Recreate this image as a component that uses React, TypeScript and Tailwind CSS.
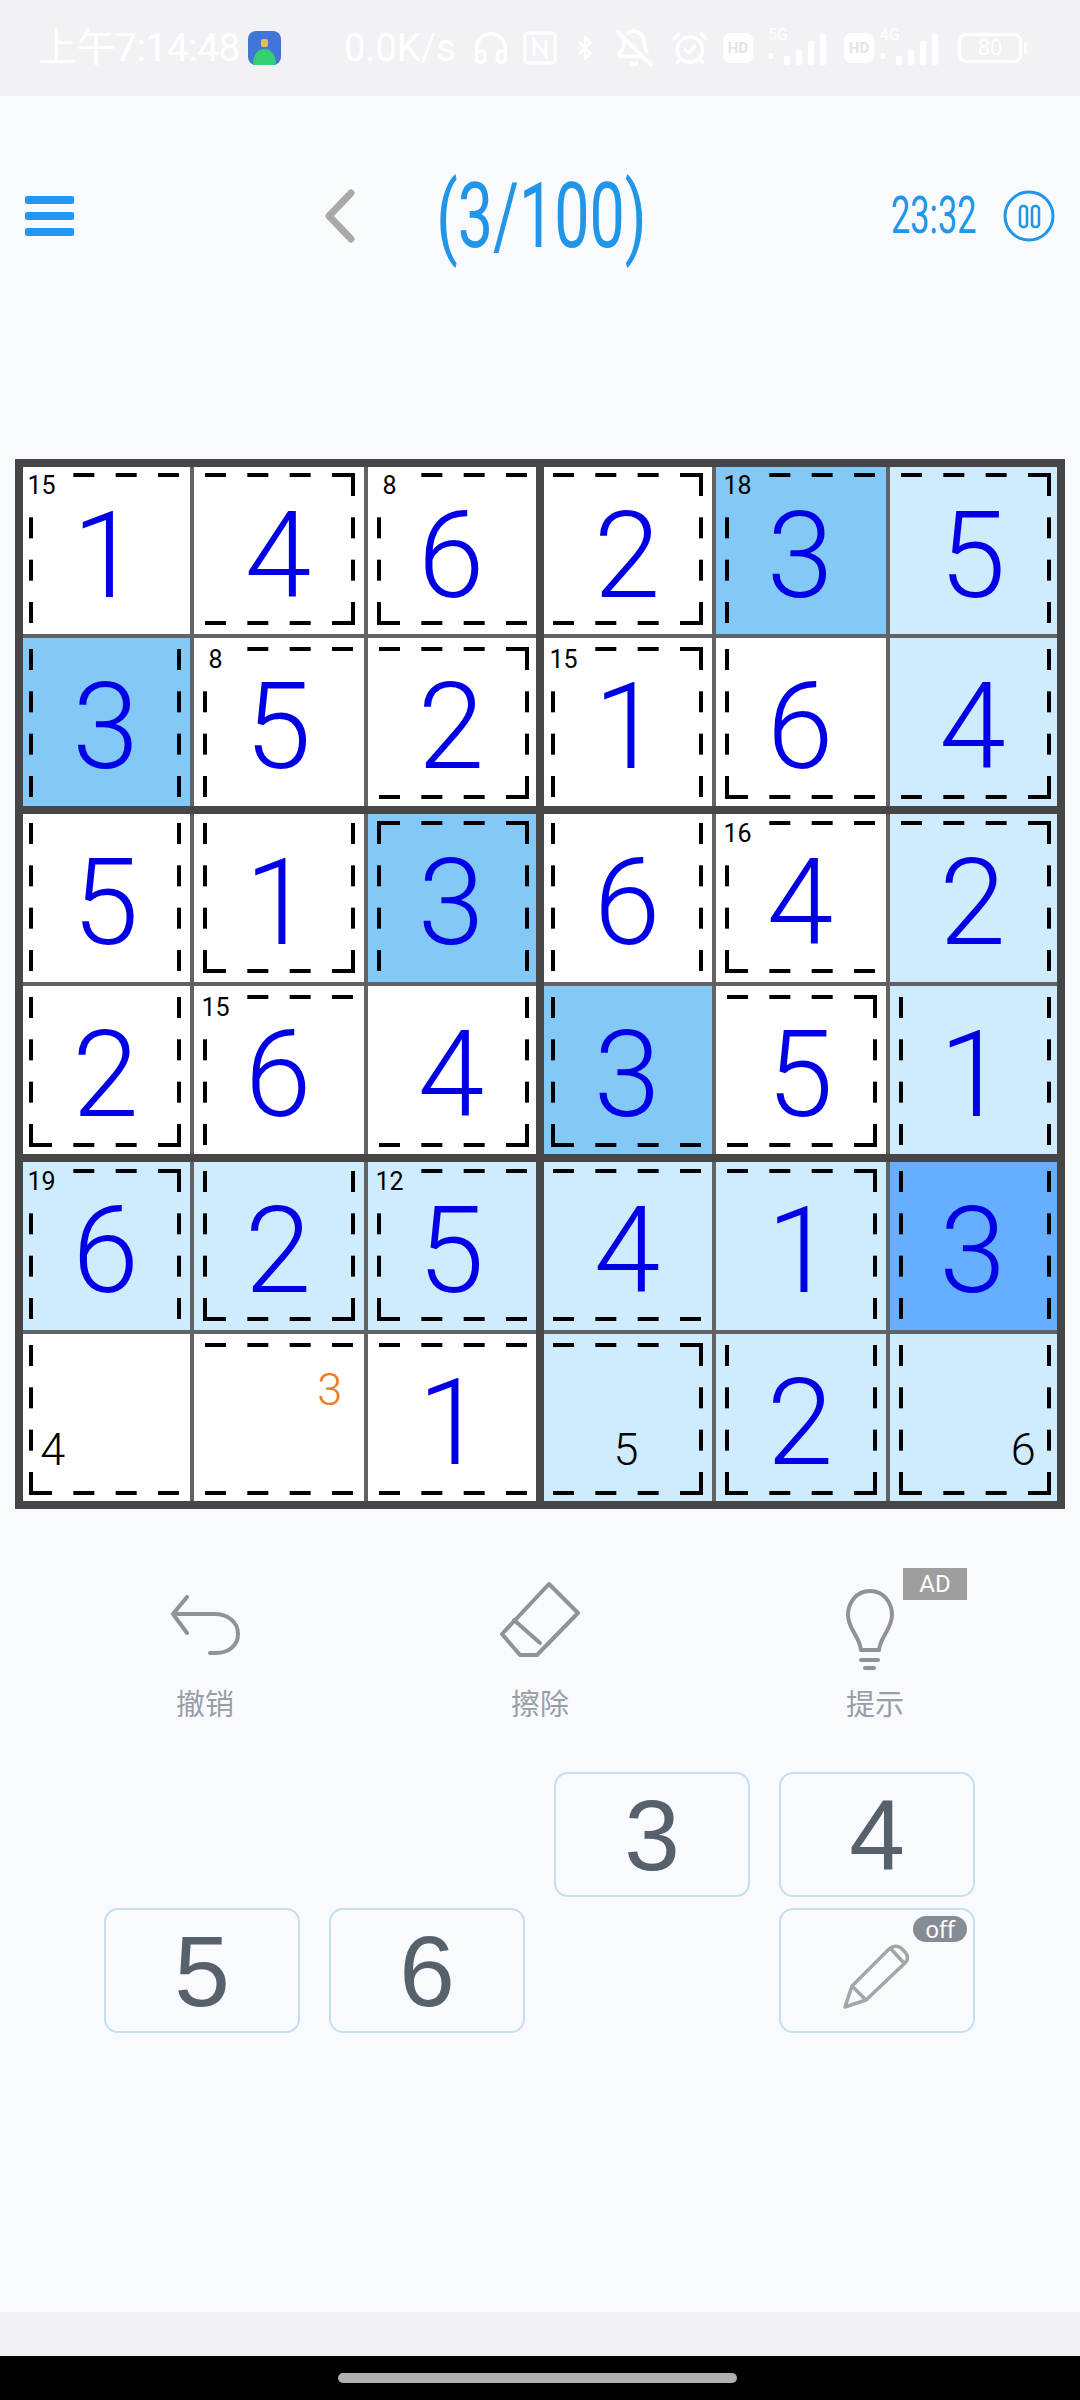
import { AlarmClockCheck, BellOff, Bluetooth, Headphones } from 'lucide-react'

type Cell = {
  value?: number
  bg: 'w' | 'l' | 'm' | 's'
  sides: string
  sum?: number
  note?: number
}

const cells: Cell[][] = [
  [
    { value: 1, bg: 'w', sides: 'tl', sum: 15 },
    { value: 4, bg: 'w', sides: 'trb' },
    { value: 6, bg: 'w', sides: 'tlb', sum: 8 },
    { value: 2, bg: 'w', sides: 'trb' },
    { value: 3, bg: 'm', sides: 'tl', sum: 18 },
    { value: 5, bg: 'l', sides: 'tr' },
  ],
  [
    { value: 3, bg: 'm', sides: 'lr' },
    { value: 5, bg: 'w', sides: 'tl', sum: 8 },
    { value: 2, bg: 'w', sides: 'trb' },
    { value: 1, bg: 'w', sides: 'trl', sum: 15 },
    { value: 6, bg: 'w', sides: 'lb' },
    { value: 4, bg: 'l', sides: 'rb' },
  ],
  [
    { value: 5, bg: 'w', sides: 'lr' },
    { value: 1, bg: 'w', sides: 'lrb' },
    { value: 3, bg: 'm', sides: 'trl' },
    { value: 6, bg: 'w', sides: 'lr' },
    { value: 4, bg: 'w', sides: 'tlb', sum: 16 },
    { value: 2, bg: 'l', sides: 'tr' },
  ],
  [
    { value: 2, bg: 'w', sides: 'lrb' },
    { value: 6, bg: 'w', sides: 'tl', sum: 15 },
    { value: 4, bg: 'w', sides: 'rb' },
    { value: 3, bg: 'm', sides: 'lb' },
    { value: 5, bg: 'w', sides: 'trb' },
    { value: 1, bg: 'l', sides: 'lr' },
  ],
  [
    { value: 6, bg: 'l', sides: 'trl', sum: 19 },
    { value: 2, bg: 'l', sides: 'lrb' },
    { value: 5, bg: 'l', sides: 'tlb', sum: 12 },
    { value: 4, bg: 'l', sides: 'tb' },
    { value: 1, bg: 'l', sides: 'tr' },
    { value: 3, bg: 's', sides: 'lr' },
  ],
  [
    { bg: 'w', sides: 'lb', note: 4 },
    { bg: 'w', sides: 'tb', note: 3 },
    { value: 1, bg: 'w', sides: 'tb' },
    { bg: 'l', sides: 'trb', note: 5 },
    { value: 2, bg: 'l', sides: 'lrb' },
    { bg: 'l', sides: 'lrb', note: 6 },
  ],
]

const bgClass = { w: 'bg-white', l: 'bg-[#cfebfe]', m: 'bg-[#83c9f7]', s: 'bg-[#66aeff]' }
const sumLeft = ['left-[8px]', 'left-[11px]', 'left-[11px]', 'left-[9px]', 'left-[11px]', 'left-[11px]']
const sumTop = ['top-[8px]', 'top-[11px]', 'top-[9px]', 'top-[11px]', 'top-[9px]', 'top-[11px]']
const blockRows = ['grid-rows-[167px_168px]', 'grid-rows-[168px_168px]', 'grid-rows-[168px_167px]']
const blockCols = ['grid-cols-[167px_170px_168px]', 'grid-cols-[168px_170px_167px]']

const DASH = 21
const STEP = 42.33
const BOX = 148

function CageLines() {
  const rects: { x: number; y: number; w: number; h: number }[] = []
  cells.forEach((row, r) =>
    row.forEach((cell, c) => {
      const x = 16 + 174 * c
      const y = 16 + 174 * r
      const first = cell.sum ? 1 : 0
      for (let i = 0; i < 4; i++) {
        const o = i * STEP
        if (cell.sides.includes('t') && i >= first) rects.push({ x: x + o, y: y - 2, w: DASH, h: 4 })
        if (cell.sides.includes('b')) rects.push({ x: x + o, y: y + BOX - 2, w: DASH, h: 4 })
        if (cell.sides.includes('l') && i >= first) rects.push({ x: x - 2, y: y + o, w: 4, h: DASH })
        if (cell.sides.includes('r')) rects.push({ x: x + BOX - 2, y: y + o, w: 4, h: DASH })
      }
      const corner = (cx: number, cy: number) => rects.push({ x: cx - 2, y: cy - 2, w: 4, h: 4 })
      if (cell.sides.includes('t') && cell.sides.includes('r')) corner(x + BOX, y)
      if (cell.sides.includes('b') && cell.sides.includes('r')) corner(x + BOX, y + BOX)
      if (cell.sides.includes('b') && cell.sides.includes('l')) corner(x, y + BOX)
      if (cell.sides.includes('t') && cell.sides.includes('l') && !cell.sum) corner(x, y)
    }),
  )
  return (
    <svg viewBox="0 0 1050 1050" className="absolute inset-0 h-[1050px] w-[1050px] pointer-events-none">
      {rects.map((d, i) => (
        <rect key={i} x={d.x} y={d.y} width={d.w} height={d.h} fill="#000" />
      ))}
    </svg>
  )
}

function BoardCell({ cell, r, c }: { cell: Cell; r: number; c: number }) {
  return (
    <div className={`relative ${bgClass[cell.bg]}`}>
      {cell.value && (
        <div className="flex h-full items-center justify-center pt-[10px] pr-[2px] font-['Roboto'] text-[120px] leading-none font-light text-[#0000e6]">
          {cell.value}
        </div>
      )}
      {cell.note && (
        <div className="grid h-full grid-cols-3 grid-rows-2 pt-[26px] pr-[8px] pb-[22px] pl-[4px] font-['Roboto'] text-[45px] leading-none font-light">
          {[1, 2, 3, 4, 5, 6].map((n) => (
            <span key={n} className={`flex items-center justify-center ${n === 3 ? 'text-[#ee7d22]' : 'text-black'}`}>
              {n === cell.note ? n : ''}
            </span>
          ))}
        </div>
      )}
      {cell.sum && (
        <div
          className={`absolute flex h-[21px] w-[21px] items-center justify-center font-['Roboto'] text-[25px] leading-none text-black ${sumLeft[c]} ${sumTop[r]}`}
        >
          {cell.sum}
        </div>
      )}
    </div>
  )
}

function Board() {
  return (
    <div className="relative mx-[15px] grid w-[1050px] grid-cols-2 gap-2 bg-[#464646] p-2">
      {[0, 1, 2].map((b) =>
        [0, 1].map((s) => (
          <div key={`${b}-${s}`} className={`grid gap-1 bg-[#616365] ${blockRows[b]} ${blockCols[s]}`}>
            {[2 * b, 2 * b + 1].map((r) =>
              [3 * s, 3 * s + 1, 3 * s + 2].map((c) => <BoardCell key={c} cell={cells[r][c]} r={r} c={c} />),
            )}
          </div>
        )),
      )}
      <CageLines />
    </div>
  )
}

function Signal({ label }: { label: string }) {
  return (
    <div className="relative h-[36px] w-[64px]">
      <span className="absolute left-0 top-[-3px] font-['Roboto'] text-[16px] leading-none text-white">{label}</span>
      <svg viewBox="0 0 64 36" className="h-[36px] w-[64px]" fill="#fff">
        <rect x="1" y="23" width="4" height="6" />
        <rect x="16" y="26" width="6" height="9" rx="2" />
        <rect x="28" y="19" width="6" height="16" rx="2" />
        <rect x="40" y="11" width="6" height="24" rx="2" />
        <rect x="52" y="3" width="6" height="32" rx="2" />
      </svg>
    </div>
  )
}

function HdBadge() {
  return (
    <span className="flex h-[30px] w-[30px] items-center justify-center rounded-[7px] bg-white font-['Roboto'] text-[15px] font-bold text-[#e4e3e8]">
      HD
    </span>
  )
}

function StatusBar() {
  return (
    <div className="flex h-[96px] items-center bg-[#f2f1f5] pl-[38px] font-['Roboto','Noto_Sans_CJK_SC',sans-serif] text-white">
      <span className="w-[200px] text-[39px] leading-none tracking-[-0.5px] whitespace-nowrap">上午7:14:48</span>
      <svg viewBox="0 0 33 34" className="ml-[10px] h-[34px] w-[33px]">
        <rect width="33" height="34" rx="8" fill="#3f76d8" />
        <path d="M5 34 C5 22 11 18 16.5 18 C22 18 28 22 28 34 Z" fill="#35cf73" />
        <rect x="13" y="8" width="7" height="8" rx="2" fill="#e3c04a" />
      </svg>
      <span className="ml-[63px] w-[117px] text-[38px] leading-none whitespace-nowrap">0.0K/s</span>
      <Headphones className="ml-[11px] h-[42px] w-[38px]" strokeWidth={2.2} />
      <svg viewBox="0 0 34 34" className="ml-[13px] h-[34px] w-[34px]" fill="none" stroke="#fff" strokeWidth="3">
        <rect x="2" y="2" width="30" height="30" rx="3" />
        <path d="M11 25 V9 L23 25 V9" />
      </svg>
      <Bluetooth className="ml-[15px] h-[38px] w-[26px]" strokeWidth={2.2} />
      <BellOff className="ml-[15px] h-[40px] w-[42px]" strokeWidth={2.2} />
      <AlarmClockCheck className="ml-[16px] h-[40px] w-[38px]" strokeWidth={2.2} />
      <span className="ml-[14px]"><HdBadge /></span>
      <span className="ml-[15px]"><Signal label="5G" /></span>
      <span className="ml-[12px]"><HdBadge /></span>
      <span className="ml-[6px]"><Signal label="4G" /></span>
      <div className="ml-[14px] flex items-center">
        <span className="flex h-[30px] w-[64px] items-center justify-center rounded-[8px] border-[3px] border-white text-[22px] leading-none">
          80
        </span>
        <span className="ml-[2px] h-[12px] w-[3px] rounded-r bg-white" />
      </div>
    </div>
  )
}

function Header() {
  return (
    <div className="flex h-[240px] items-center text-[#2196e8]">
      <div className="ml-[25px] flex w-[49px] flex-col gap-[8px]">
        <span className="h-[8px] rounded-[2px] bg-[#2196f3]" />
        <span className="h-[8px] rounded-[2px] bg-[#2196f3]" />
        <span className="h-[8px] rounded-[2px] bg-[#2196f3]" />
      </div>
      <svg viewBox="0 0 32 54" className="ml-[250px] h-[54px] w-[32px]" fill="none" stroke="#a9a9a9" strokeWidth="7" strokeLinecap="round" strokeLinejoin="round">
        <path d="M27 4 L5 27 L27 50" />
      </svg>
      <div className="ml-[85px] flex w-[200px] justify-center font-['Roboto'] text-[91px] leading-none">
        <span className="inline-block scale-x-[0.69] whitespace-nowrap">(3/100)</span>
      </div>
      <div className="ml-[249px] flex w-[88px] justify-center font-['Roboto'] text-[52px] leading-none">
        <span className="inline-block scale-x-[0.66] whitespace-nowrap">23:32</span>
      </div>
      <svg viewBox="0 0 52 52" className="ml-[25px] h-[52px] w-[52px]" fill="none" stroke="#2196e8" strokeWidth="3">
        <circle cx="26" cy="26" r="24" />
        <rect x="17" y="16" width="7" height="21" rx="3" strokeWidth="2.5" />
        <rect x="29" y="16" width="7" height="21" rx="3" strokeWidth="2.5" />
      </svg>
    </div>
  )
}

function ToolButton({ label, children }: { label: string; children: React.ReactNode }) {
  return (
    <div className="relative flex w-[120px] flex-col items-center">
      <div className="flex h-[90px] w-full items-center justify-center">{children}</div>
      <span className="mt-[18px] font-['Noto_Sans_CJK_SC',sans-serif] text-[29px] leading-none text-[#9a9ea4]">{label}</span>
    </div>
  )
}

function Tools() {
  const icon = { fill: 'none', stroke: '#8e9399', strokeWidth: 4, strokeLinecap: 'round', strokeLinejoin: 'round' } as const
  return (
    <div className="mt-[71px] flex gap-[215px] pl-[145px]">
      <ToolButton label="撤销">
        <svg viewBox="0 0 70 60" className="h-[60px] w-[70px]" {...icon}>
          <path d="M17 2 L3 19 L17 38 M3 19 H44 C58 19 68 27 68 39 C68 51 58 58 46 58 H40" />
        </svg>
      </ToolButton>
      <ToolButton label="擦除">
        <svg viewBox="0 0 82 78" className="mb-[10px] h-[78px] w-[82px]" {...icon}>
          <path d="M50 3 L79 32 L38 74 H21 L3 53 Z M15 39 L41 62" />
        </svg>
      </ToolButton>
      <ToolButton label="提示">
        <svg viewBox="0 0 49 81" className="mt-[8px] mr-[10px] h-[81px] w-[49px]" fill="none" stroke="#8e9399" strokeWidth="4" strokeLinejoin="round">
          <path d="M24 2 C10 2 2 14 2 26 C2 40 14 48 15 61 H33 C34 48 46 40 46 26 C46 14 38 2 24 2 Z" />
          <rect x="13" y="69" width="21" height="4" rx="2" fill="#8e9399" stroke="none" />
          <rect x="17" y="77" width="13" height="4" rx="2" fill="#8e9399" stroke="none" />
        </svg>
        <span className="absolute right-[-32px] top-[-12px] flex h-[32px] w-[64px] items-center justify-center bg-[#9e9e9e] font-['Roboto'] text-[24px] leading-none text-white">
          AD
        </span>
      </ToolButton>
    </div>
  )
}

function Key({ className, children }: { className: string; children: React.ReactNode }) {
  return (
    <div className={`relative flex items-center justify-center rounded-[14px] border-2 border-[#c4dff0] font-['Liberation_Sans'] text-[100px] leading-none text-[#56616c] ${className}`}>
      {children}
    </div>
  )
}

function Keypad() {
  return (
    <div className="mt-[55px] ml-[104px] grid w-[871px] grid-cols-[196px_196px_196px_196px] grid-rows-[125px_125px] gap-x-[29px] gap-y-[11px]">
      <Key className="col-start-3 row-start-1">3</Key>
      <Key className="col-start-4 row-start-1">4</Key>
      <Key className="col-start-1 row-start-2">5</Key>
      <Key className="col-start-2 row-start-2">6</Key>
      <Key className="col-start-4 row-start-2">
        <svg viewBox="0 0 66 66" className="mt-[10px] mr-[2px] h-[66px] w-[66px]" fill="none" stroke="#a3a6a9" strokeWidth="3.5" strokeLinejoin="round">
          <path d="M2 64 L9 43 L46 6 Q52 1 58 5 L62 9 Q67 15 62 20 L23 57 Z M9 43 L23 57 M48 6 L61 20" />
        </svg>
        <span className="absolute right-[6px] top-[6px] flex h-[26px] w-[54px] items-center justify-center rounded-full bg-[#868c94] font-['Noto_Sans'] text-[23px] leading-none text-white">
          off
        </span>
      </Key>
    </div>
  )
}

export default function App() {
  return (
    <div className="flex h-[2400px] w-[1080px] flex-col overflow-hidden bg-[#f8fafe]">
      <StatusBar />
      <Header />
      <div className="mt-[123px]">
        <Board />
      </div>
      <Tools />
      <Keypad />
      <div className="mt-auto h-[44px] bg-[#f2f1f5]" />
      <div className="flex h-[44px] items-center justify-center bg-black pr-[6px]">
        <span className="h-[10px] w-[399px] rounded-full bg-[#b0b0b0]" />
      </div>
    </div>
  )
}
